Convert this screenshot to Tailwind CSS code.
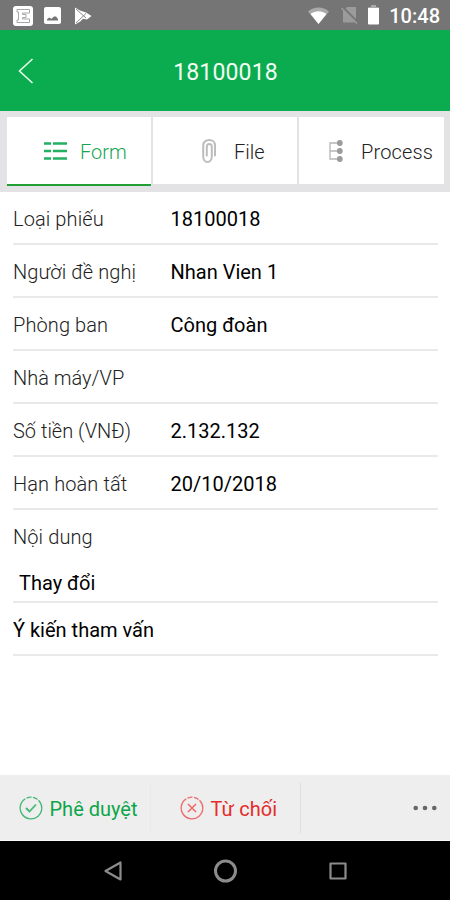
<!DOCTYPE html>
<html lang="vi">
 <head>
  <meta charset="utf-8"/>
  <meta content="width=device-width, initial-scale=1" name="viewport"/>
  <title>18100018</title>
  <script src="https://cdn.jsdelivr.net/npm/@tailwindcss/browser@4"></script>
 </head>
 <body class="bg-white font-[Roboto,sans-serif] text-black">
  <div class="w-[450px] h-[900px] flex flex-col overflow-hidden whitespace-nowrap">
   <!-- Status bar -->
   <div class="h-[30px] shrink-0 bg-[#757575] flex items-center pl-[13px] pr-[10px] text-white">
    <svg class="w-5 h-5 mt-px" viewBox="0 0 20 20" fill="none">
     <rect width="20" height="20" rx="3" fill="#fff"/>
     <path d="M4 3.500h12.500v3.500H9.500v1.500H13v3H9.500V13h7v3.500H4V14h1.500V6H4z" stroke="#a8a8a8" stroke-width="1"/>
    </svg>
    <svg class="w-[17px] h-[17px] ml-[11px] mt-px" viewBox="0 0 17 17">
     <rect width="17" height="17" rx="2" fill="#fff"/>
     <path d="M3 13.500v-1l2-2 2.500 1.200 2.500-2.200h2l2 2.500v1.500z" fill="#757575"/>
    </svg>
    <svg class="w-[18px] h-[18px] ml-[13px] mt-px" viewBox="0 0 18 18">
     <path d="M1 .5v17l5-2.800 3-3 4 .7L17.500 9 12 5.500 6 3.500z" fill="#fff"/>
     <path d="M2 2l10 9M2 16l10-9.500" stroke="#8a8a8a" stroke-width="1" fill="none"/>
    </svg>
    <svg class="w-[21px] h-[17px] ml-auto" viewBox="0 0 21 17">
     <path d="M0 4.500C6-1 15-1 21 4.500L10.500 17z" fill="#a9a9a9"/>
     <path d="M2.500 7C7.500 3.300 13.500 3.300 18.500 7L10.500 17z" fill="#fff"/>
    </svg>
    <svg class="w-[18px] h-[18px] ml-3" viewBox="0 0 18 18">
     <path d="M6 1h9v15.500H2V5z" fill="#9b9b9b"/>
     <path d="M1 1l16 16" stroke="#757575" stroke-width="3"/>
     <path d="M.5 2l15.500 15.500" stroke="#9b9b9b" stroke-width="1.600"/>
    </svg>
    <svg class="w-[11px] h-[20px] ml-[9px]" viewBox="0 0 11 20">
     <path d="M3 0h5v2h2q1 0 1 1H0q0-1 1-1h2z" fill="#a9a9a9"/>
     <path d="M0 3h11v15.500q0 1-1 1H1q-1 0-1-1z" fill="#fff"/>
    </svg>
    <span class="ml-[10px] mt-[2px] text-[20px] leading-6 font-medium">10:48</span>
   </div>

   <!-- Title bar -->
   <div class="h-[81px] shrink-0 bg-[#0bac4f] grid grid-cols-[60px_1fr_60px] items-center text-[#f3fff5]">
    <svg class="w-4 h-[26px] ml-[18px]" viewBox="0 0 16 26" fill="none" stroke="#e6ffe9" stroke-width="1.600">
     <path d="M14.500 1L1.500 13l13 12"/>
    </svg>
    <h1 class="text-center text-[23px] leading-7 font-normal tracking-[0.15px] mt-[4px] pl-px">18100018</h1>
   </div>

   <!-- Tabs -->
   <div class="h-[81px] shrink-0 bg-[#e3e3e5] pt-[6px] pb-[6px] pl-[7px] pr-[6px] flex gap-[2px] text-[20px] font-light text-[#222]">
    <div class="w-[144px] bg-white border-b-2 border-[#1f9f35] flex items-center text-[#16a653]">
     <svg class="w-[23px] h-[18px] ml-[37px]" viewBox="0 0 23 18" stroke="#22b061" stroke-width="2.400">
      <path d="M0 1.500h7M9 1.500h14M0 9h7M9 9h14M0 16.500h7M9 16.500h14"/>
     </svg>
     <span class="ml-[13px] mt-[2px]">Form</span>
    </div>
    <div class="w-[144px] h-[67px] bg-white flex items-center">
     <svg class="w-[14px] h-6 ml-[49px]" viewBox="0 0 14 24" fill="none" stroke="#bdbdbd" stroke-width="2" stroke-linecap="round">
      <path d="M13 16.500V6.500C13 -.8 1.200 -.8 1.200 6.500V17.500C1.200 24.800 9.800 24.800 9.800 17.500V8C9.800 4 4.800 4 4.800 8V16.500"/>
     </svg>
     <span class="ml-[18px] mt-[3px]">File</span>
    </div>
    <div class="w-[145px] h-[67px] bg-white flex items-center">
     <svg class="w-[14px] h-[22px] ml-[30px] mt-px" viewBox="0 0 14 22">
      <path d="M10 3H1v16h9M1 11h9" fill="none" stroke="#b5b5b5" stroke-width="1.300"/>
      <g fill="#9b9b9b">
       <circle cx="10.800" cy="3" r="2.900"/>
       <circle cx="10.800" cy="11" r="2.900"/>
       <circle cx="10.800" cy="19" r="2.900"/>
      </g>
     </svg>
     <span class="ml-[18px] mt-[3px] tracking-[0.15px]">Process</span>
    </div>
   </div>

   <!-- Form fields -->
   <div class="flex-1 pl-[13px] pr-3 text-[20px] leading-6">
    <div class="h-[53px] border-b-2 border-[#e9e9e9] grid grid-cols-[157.5px_1fr] items-center pt-[2px]">
     <span class="font-light text-[#222] tracking-[0.1px]">Loại phiếu</span>
     <span>18100018</span>
    </div>
    <div class="h-[53px] border-b-2 border-[#e9e9e9] grid grid-cols-[157.5px_1fr] items-center pt-[3px]">
     <span class="font-light text-[#222] tracking-[0.1px]">Người đề nghị</span>
     <span>Nhan Vien 1</span>
    </div>
    <div class="h-[53px] border-b-2 border-[#e9e9e9] grid grid-cols-[157.5px_1fr] items-center pt-[3px]">
     <span class="font-light text-[#222] tracking-[0.1px]">Phòng ban</span>
     <span>Công đoàn</span>
    </div>
    <div class="h-[53px] border-b-2 border-[#e9e9e9] grid grid-cols-[157.5px_1fr] items-center pt-[3px]">
     <span class="font-light text-[#222]">Nhà máy/VP</span>
     <span></span>
    </div>
    <div class="h-[53px] border-b-2 border-[#e9e9e9] grid grid-cols-[157.5px_1fr] items-center pt-[3px]">
     <span class="font-light text-[#222]">Số tiền (VNĐ)</span>
     <span>2.132.132</span>
    </div>
    <div class="h-[53px] border-b-2 border-[#e9e9e9] grid grid-cols-[157.5px_1fr] items-center pt-[3px]">
     <span class="font-light text-[#222] tracking-[0.1px]">Hạn hoàn tất</span>
     <span>20/10/2018</span>
    </div>
    <div class="h-[93px] border-b-2 border-[#e9e9e9] pt-[15px]">
     <p class="font-light text-[#222] tracking-[0.1px]">Nội dung</p>
     <p class="pl-[6px] mt-[22px]">Thay đổi</p>
    </div>
    <div class="h-[53px] border-b-2 border-[#e9e9e9] flex items-center pt-[3px]">Ý kiến tham vấn</div>
   </div>

   <!-- Actions -->
   <div class="h-[66px] shrink-0 bg-[#eeeeee] border-b border-[#fafafa] flex items-center text-[20px]">
    <div class="w-[151px] h-[50px] border-r border-[#e9e9e9] flex items-center pl-[19px] text-[#0ba64a]">
     <svg class="w-6 h-6" viewBox="0 0 24 24" fill="none" stroke="#43b974" stroke-width="1.300">
      <path d="M14 1.400A10.800 10.800 0 0 1 18.500 3.400M19.500 4.300A10.800 10.800 0 1 1 6.200 2.900M7.500 2.200A10.800 10.800 0 0 1 12.500 1.200"/>
      <path d="M7 12l3.500 3.500 6.500-7" stroke-width="1.800"/>
     </svg>
     <span class="ml-[6.5px] mt-[2px]">Phê duyệt</span>
    </div>
    <div class="w-[150px] h-[50px] border-r border-[#dfdfdf] flex items-center pl-[29px] text-[#e52b2b]">
     <svg class="w-6 h-6" viewBox="0 0 24 24" fill="none" stroke="#f06a6a" stroke-width="1.300">
      <path d="M14 1.400A10.800 10.800 0 0 1 18.500 3.400M19.500 4.300A10.800 10.800 0 1 1 6.200 2.900M7.500 2.200A10.800 10.800 0 0 1 12.500 1.200"/>
      <path d="M8 8l8 8M16 8l-8 8" stroke-width="1.600"/>
     </svg>
     <span class="ml-[6.5px] mt-[2px] tracking-[0.1px]">Từ chối</span>
    </div>
    <svg class="w-6 h-[6px] ml-auto mr-[13px]" viewBox="0 0 24 6" fill="#666">
     <circle cx="2.700" cy="3" r="2.300"/>
     <circle cx="12" cy="3" r="2.300"/>
     <circle cx="21.300" cy="3" r="2.300"/>
    </svg>
   </div>

   <!-- Navigation bar -->
   <div class="h-[59px] shrink-0 bg-black flex items-center pl-[104px]">
    <svg class="w-[18px] h-5" viewBox="0 0 18 20" fill="none" stroke="#8c8c8c" stroke-width="2.200" stroke-linejoin="round">
     <path d="M16.500 1.500v17L1.500 10z"/>
    </svg>
    <svg class="w-6 h-6 ml-[91px]" viewBox="0 0 24 24" fill="none" stroke="#8c8c8c" stroke-width="3">
     <circle cx="12.500" cy="12" r="10"/>
    </svg>
    <svg class="w-[18px] h-[18px] ml-[92px]" viewBox="0 0 18 18" fill="none" stroke="#8c8c8c" stroke-width="2.200" stroke-linejoin="round">
     <rect x="1.500" y="1.500" width="15" height="15"/>
    </svg>
   </div>
  </div>
 </body>
</html>
